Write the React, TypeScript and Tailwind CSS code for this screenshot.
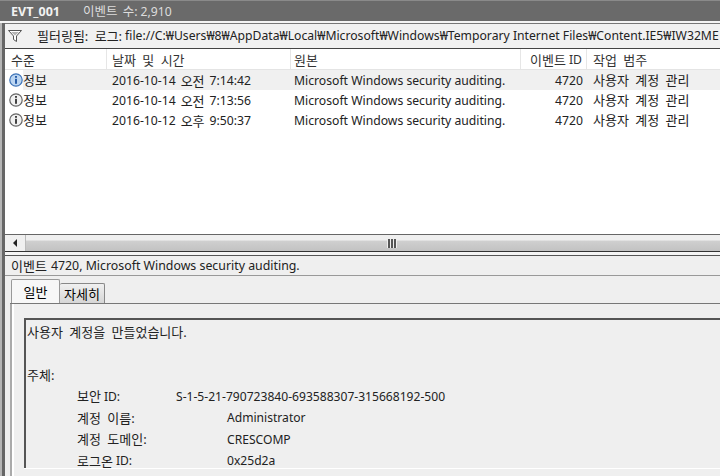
import type { ReactNode } from "react";

const FONT = "font-['Noto_Sans','Noto_Sans_CJK_KR',sans-serif]";

const EVENTS = [
  { date: "2016-10-14", ampm: "오전", time: "7:14:42", selected: true },
  { date: "2016-10-14", ampm: "오전", time: "7:13:56", selected: false },
  { date: "2016-10-12", ampm: "오후", time: "9:50:37", selected: false },
];

const FIELDS = [
  { label: "보안", tail: "ID:", value: "S-1-5-21-790723840-693588307-315668192-500", width: "w-[99px]" },
  { label: "계정 이름:", tail: "", value: "Administrator", width: "w-[150px]" },
  { label: "계정 도메인:", tail: "", value: "CRESCOMP", width: "w-[150px]" },
  { label: "로그온", tail: "ID:", value: "0x25d2a", width: "w-[150px]" },
];

// hangul runs wider than the latin text in the original
function Ko({ children }: { children: ReactNode }) {
  return <span className="text-[13px] [word-spacing:3px]">{children}</span>;
}

function InfoIcon({ blue }: { blue: boolean }) {
  return (
    <svg width="14" height="14" viewBox="0 0 14 14" className="shrink-0">
      <circle cx="7" cy="7" r="6.2" fill={blue ? "#bcd6f2" : "#f2f2f2"} stroke={blue ? "#3f74b8" : "#666666"} strokeWidth="1.2" />
      <rect x="6" y="3" width="2" height="1.8" fill={blue ? "#2a5ea8" : "#444444"} />
      <rect x="6" y="5.8" width="2" height="5" fill={blue ? "#2a5ea8" : "#444444"} />
    </svg>
  );
}

function Funnel() {
  return (
    <svg width="14" height="12" viewBox="0 0 14 12" className="shrink-0">
      <path d="M0.5 0.5H13.5L8.5 6V11.5L5.5 9.5V6Z" fill="#ffffff" stroke="#555555" strokeWidth="1" />
      <path d="M3 2H11L7 5.5Z" fill="#b5b5b5" />
    </svg>
  );
}

function Header() {
  return (
    <div className="flex h-[21px] shrink-0 items-stretch border-b border-[#e4e4e4] bg-white text-[#333]">
      <div className="flex w-[102px] shrink-0 items-center border-r border-[#e6e6e6] pl-[6px] pt-[2px]"><Ko>수준</Ko></div>
      <div className="flex w-[184px] shrink-0 items-center border-r border-[#e6e6e6] pl-[5px] pt-[2px]"><Ko>날짜 및 시간</Ko></div>
      <div className="flex w-[230px] shrink-0 items-center border-r border-[#e6e6e6] pl-[3px] pt-[2px]"><Ko>원본</Ko></div>
      <div className="flex w-[66px] shrink-0 items-center justify-end gap-[3px] border-r border-[#e6e6e6] pr-[4px] pt-[2px]"><Ko>이벤트</Ko>ID</div>
      <div className="flex flex-1 items-center pl-[6px] pt-[2px]"><Ko>작업 범주</Ko></div>
    </div>
  );
}

function EventRow({ date, ampm, time, selected }: { date: string; ampm: string; time: string; selected: boolean }) {
  return (
    <div className="flex h-[20px] shrink-0 items-center text-[#222]">
      <div className="flex w-[18px] shrink-0 items-center pl-[4px]">
        <InfoIcon blue={selected} />
      </div>
      <div className={`flex h-full flex-1 items-center pt-[2px] ${selected ? "bg-[#f0f0f0]" : ""}`}>
        <div className="w-[84px] shrink-0"><Ko>정보</Ko></div>
        <div className="flex w-[184px] shrink-0 items-center gap-[5px] pl-[5px]">
          <span>{date}</span>
          <Ko>{ampm}</Ko>
          <span>{time}</span>
        </div>
        <div className="w-[230px] shrink-0 pl-[3px]">Microsoft Windows security auditing.</div>
        <div className="w-[66px] shrink-0 pr-[4px] text-right">4720</div>
        <div className="flex-1 pl-[6px]"><Ko>사용자 계정 관리</Ko></div>
      </div>
    </div>
  );
}

function Scrollbar() {
  return (
    <div className="flex h-[17px] shrink-0 items-stretch border-t border-[#666] bg-[#f0f0f0]">
      <div className="flex w-[20px] shrink-0 items-center justify-center">
        <div className="h-0 w-0 border-y-[4px] border-r-[4px] border-y-transparent border-r-[#222]" />
      </div>
      <div className="flex flex-1 items-center justify-center border-l border-[#bbb] bg-gradient-to-b from-[#efefef] from-30% via-[#cfcfcf] via-40% to-[#c2c2c2] pl-[38px]">
        <div className="flex gap-px bg-[#eee] px-[1px]">
          <div className="h-[9px] w-[2px] bg-[#555]" />
          <div className="h-[9px] w-[2px] bg-[#555]" />
          <div className="h-[9px] w-[2px] bg-[#555]" />
        </div>
      </div>
    </div>
  );
}

export default function App() {
  return (
    <div className={`${FONT} flex h-[476px] w-[720px] flex-col overflow-hidden bg-[#efefef] text-[12.2px] leading-none`}>
      {/* title bar */}
      <div className="flex h-[21px] shrink-0 items-center border-t border-[#8a8a8a] bg-[#6a6a6a] pl-[11px] pt-[2px] text-[#f2f2f2]">
        <span className="w-[72px] text-[12.5px] font-bold">EVT_001</span>
        <span className="flex items-center gap-[3px] text-[#dddddd]">
          <span className="text-[12.5px] [word-spacing:2px]">이벤트 수:</span>
          2,910
        </span>
      </div>
      <div className="h-[2px] shrink-0 bg-[#f4f4f4]" />

      <div className="flex min-h-0 flex-1">
        {/* left gutter */}
        <div className="w-[2px] shrink-0 bg-[#b5b5b5]" />
        <div className="w-[3px] shrink-0 bg-[#666]" />

        <div className="flex min-w-0 flex-1 flex-col whitespace-nowrap">
          {/* filter bar */}
          <div className="flex h-[26px] shrink-0 items-center border-y border-t-[#777] border-b-[#444] bg-[#f1f1f1] pl-[3px] text-[#222]">
            <Funnel />
            <span className="ml-[15px] flex items-center gap-[3px]">
              <Ko>필터링됨: 로그:</Ko>
              <span className="text-[12.2px]">file://C:₩Users₩8₩AppData₩Local₩Microsoft₩Windows₩Temporary Internet Files₩Content.IE5₩IW32ME</span>
            </span>
          </div>

          {/* event list */}
          <div className="flex h-[185px] shrink-0 flex-col bg-white">
            <Header />
            {EVENTS.map((event) => (
              <EventRow key={event.time} {...event} />
            ))}
          </div>
          <Scrollbar />

          {/* detail pane */}
          <div className="h-[4px] shrink-0 border-t border-[#333] bg-[#f4f4f4]" />
          <div className="flex h-[21px] shrink-0 items-center gap-[4px] border-y border-t-[#555] border-b-[#999] bg-[#efefef] pl-[6px] pt-[1px] text-[#222]">
            <Ko>이벤트</Ko>
            <span className="text-[12.35px]">4720, Microsoft Windows security auditing.</span>
          </div>

          <div className="flex min-h-0 flex-1 flex-col pl-[5px] pt-[4px]">
            <div className="flex h-[24px] shrink-0 items-end border-b border-[#777] pl-[1px]">
              <div className="flex h-[24px] w-[49px] items-center justify-center rounded-t-[2px] border border-b-0 border-[#999] bg-[#f7f7f7] pt-[2px]"><Ko>일반</Ko></div>
              <div className="flex h-[20px] w-[45px] items-center justify-center rounded-t-[2px] border border-b-0 border-l-0 border-[#888] bg-gradient-to-b from-[#f0f0f0] to-[#d6d6d6] pt-[2px]"><Ko>자세히</Ko></div>
            </div>
            <div className="flex min-h-0 flex-1 flex-col border-l-2 border-[#aaa]">
              <div className="flex min-h-0 flex-1 flex-col border-l-2 border-white pl-[10px] pt-[14px]">
                <div className="h-[150px] shrink-0 overflow-hidden border-l-2 border-t-2 border-[#555] pl-[1px] pt-[1px] text-[#222]">
                  <div className="flex h-[22px] items-center"><Ko>사용자 계정을 만들었습니다.</Ko></div>
                  <div className="mt-[22px] flex h-[21px] items-center"><Ko>주체:</Ko></div>
                  {FIELDS.map((field) => (
                    <div key={field.label} className="flex h-[21.5px] items-center pl-[50px] text-[12.1px]">
                      <span className={`${field.width} flex shrink-0 items-center gap-[3px]`}>
                        <Ko>{field.label}</Ko>
                        {field.tail}
                      </span>
                      <span>{field.value}</span>
                    </div>
                  ))}
                </div>
                <div className="h-px shrink-0 bg-white" />
              </div>
            </div>
          </div>
        </div>
      </div>
    </div>
  );
}
